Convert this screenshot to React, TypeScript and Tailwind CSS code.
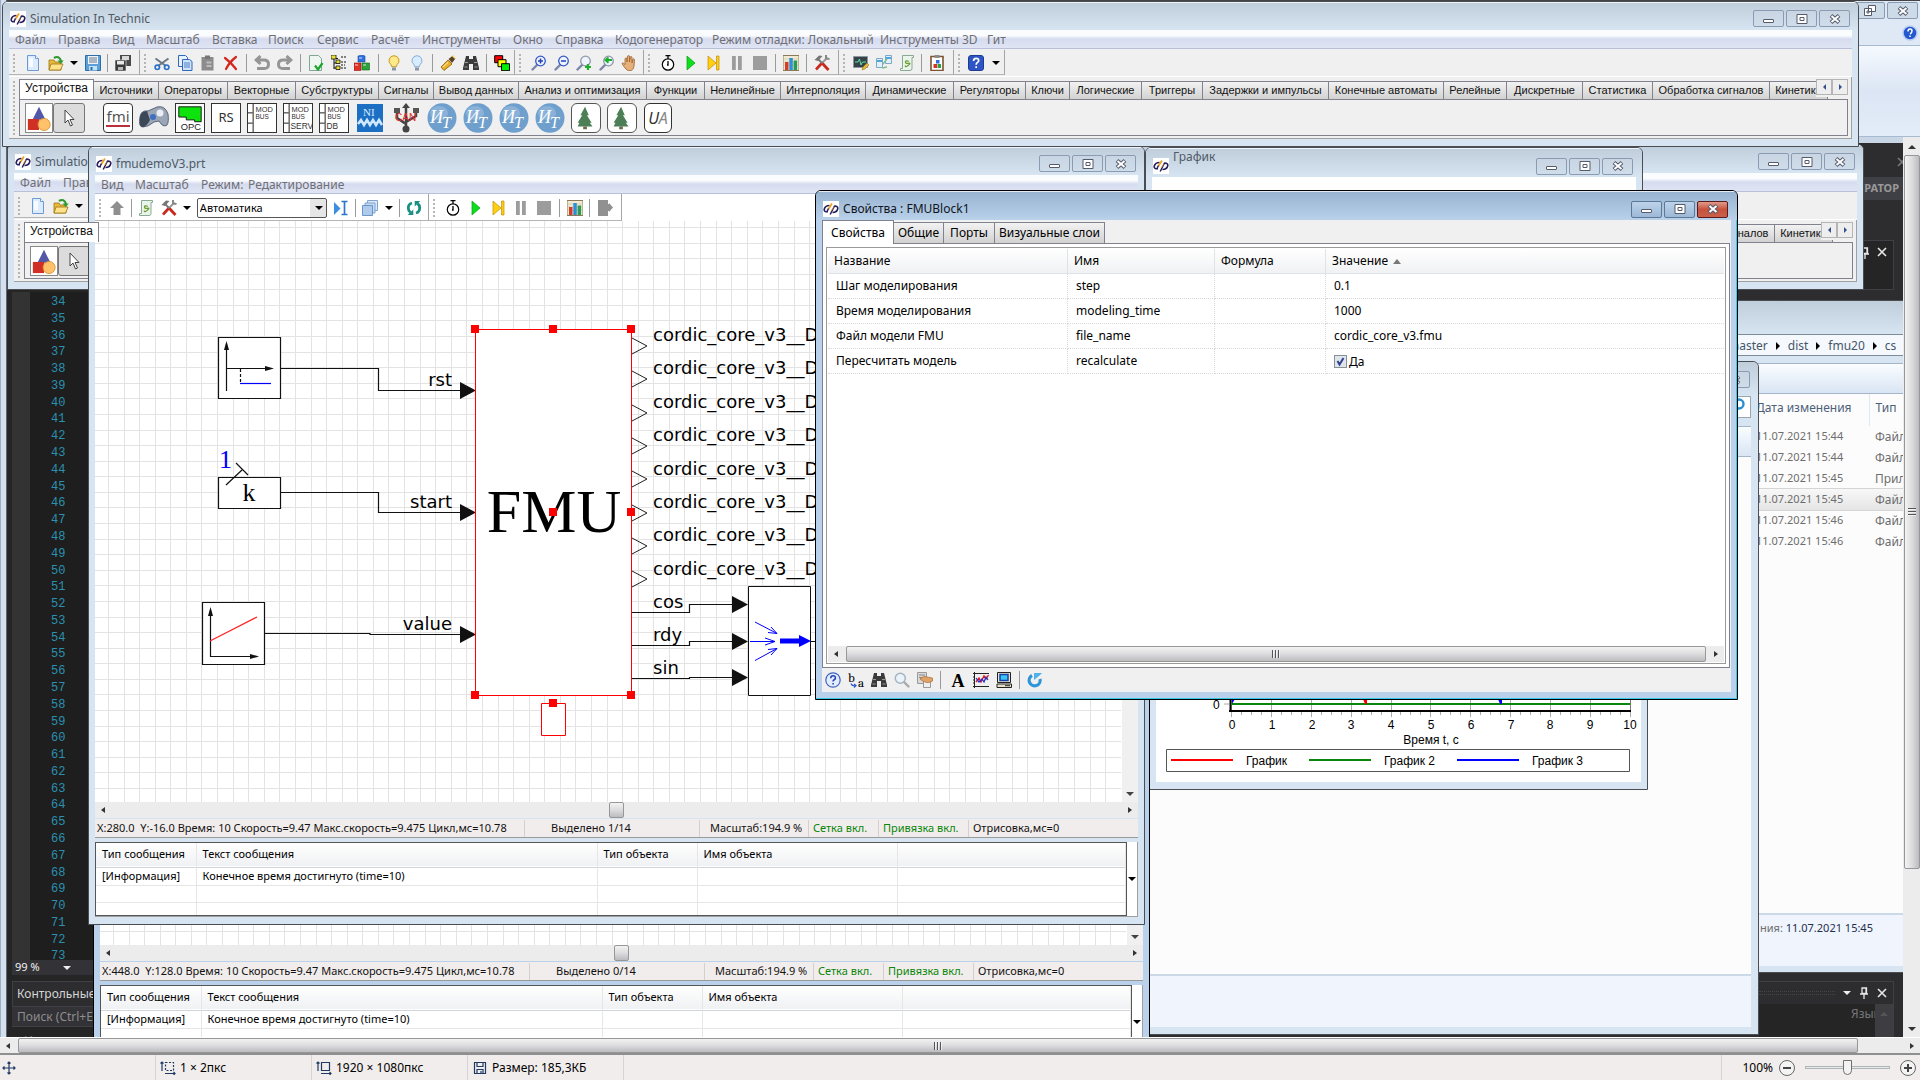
import React from "react";
import clsx from "clsx";

type Kids = { children?: React.ReactNode };

/* ---------- small drawings ---------- */

const magnifier = (c: string) => (
  <>
    <path d="M6 10 1.5 14.5" stroke="#7b86a8" strokeWidth="2.4" strokeLinecap="round" />
    <circle cx="9.5" cy="6" r="4.8" fill="#eef3ff" stroke={c} strokeWidth="1.3" />
  </>
);

const art: Record<string, React.ReactNode> = {
  new: (
    <>
      <path d="M2.5.5h8l3 3v12h-11z" fill="#dcebff" stroke="#6d9bd3" />
      <path d="M10.5.5v3h3" fill="#fff" stroke="#6d9bd3" />
      <path d="M4 3h4v9H4z" fill="#f7fbff" />
    </>
  ),
  open: (
    <>
      <path d="M1 5h5l1 2h6v8H1z" fill="#e9b93a" stroke="#9c7413" strokeWidth=".8" />
      <path d="M3 9h12l-2.5 6H1z" fill="#ffe38a" stroke="#9c7413" strokeWidth=".8" />
      <path d="M6 3c3-2 6-1 7 3" fill="none" stroke="#2f9a2f" strokeWidth="2.2" />
      <path d="M9.5 5.5h6.2L12.8 9z" fill="#2f9a2f" />
    </>
  ),
  save: (
    <>
      <path d="M.5.5h15v15h-15z" fill="#5f9fd8" stroke="#2d6da8" />
      <path d="M3 1h10v8H3z" fill="#eef4fa" />
      <path d="M4 3h8M4 5h8M4 7h8" stroke="#66788a" />
      <path d="M4 11h8v4.5H4z" fill="#bfe3f7" />
      <path d="M5.5 12h2v3h-2z" fill="#2d6da8" />
    </>
  ),
  saveall: (
    <>
      <path d="M5 0h11v11H5z" fill="#4a4a4a" />
      <path d="M7 1h7v4H7z" fill="#d8d8d8" />
      <path d="M0 5h11v11H0z" fill="#3a3a3a" stroke="#efefef" strokeWidth=".6" />
      <path d="M2 6h7v3.500H2z" fill="#e8e8e8" />
      <path d="M3 12h5v3H3z" fill="#b9b9b9" />
    </>
  ),
  cut: (
    <>
      <path d="M1.500 3.500 12 11M14.500 3.500 4 11" stroke="#6b7785" strokeWidth="2" />
      <circle cx="3.300" cy="12.300" r="2.200" fill="none" stroke="#2a74c9" strokeWidth="1.700" />
      <circle cx="12.700" cy="12.300" r="2.200" fill="none" stroke="#2a74c9" strokeWidth="1.700" />
    </>
  ),
  copy: (
    <>
      <path d="M1.500.500h7l2 2v9h-9z" fill="#e8f1ff" stroke="#2f68b8" />
      <path d="M5.500 4.500h7l2.500 2v9H5.500z" fill="#cfe1fb" stroke="#2f68b8" />
      <path d="M7 8h6M7 10h6M7 12h6" stroke="#2f68b8" strokeWidth=".8" />
    </>
  ),
  paste: (
    <>
      <path d="M1.500 2h12v13.500h-12z" fill="#8c8c8c" />
      <path d="M5 .500h5V4H5z" fill="#777" />
      <path d="M6.500 6.500h5v2h-5zM6.500 10h5v2h-5z" fill="#bdbdbd" />
    </>
  ),
  del: <path d="M2 3c4 3 8 7 11 11M13 2C9 5 5 10 3 14" fill="none" stroke="#d3261d" strokeWidth="2.200" strokeLinecap="round" />,
  undo: <path d="M4 5h6q4.500 0 4.500 4.300T10 13.500H3M6.500 1 2.200 5l4.300 4" fill="none" stroke="#959595" strokeWidth="3" />,
  redo: <path d="M12 5H6Q1.500 5 1.500 9.300T6 13.500h7M9.500 1l4.300 4-4.300 4" fill="none" stroke="#959595" strokeWidth="3" />,
  check: (
    <>
      <path d="M1.500.500h9l3 3v12h-12z" fill="#eef6f1" stroke="#7ea895" />
      <path d="m7 10.500 3 4 4.500-6.500" fill="none" stroke="#1fa52c" strokeWidth="2.200" />
    </>
  ),
  tree: (
    <>
      <path d="M3 2v12M3 3.500h4M3 8h5M3 13h5" fill="none" stroke="#111" />
      <path d="M0 0h5v4H0zM5 5h4v3.500H5zM5 11h4v3.500H5z" fill="#e6df3a" stroke="#111" strokeWidth=".8" />
      <path d="M10 2h6M10 7h6M10 10h4M10 13h6" stroke="#111" strokeDasharray="2 1" />
    </>
  ),
  cubes: (
    <>
      <path d="M4 1l4-1 3 1v6H4z" fill="#2f6fe0" stroke="#1b4aa5" strokeWidth=".6" />
      <path d="M0 8h7v7.500H0z" fill="#db3328" stroke="#92160f" strokeWidth=".6" />
      <path d="M8 8h7.500v7H8z" fill="#2ba33a" stroke="#14691f" strokeWidth=".6" />
      <path d="M1 9h3v2H1zM9 9h3v2H9zM5 2h3v2H5z" fill="#fff" opacity=".4" />
    </>
  ),
  bulb: (
    <>
      <path d="M8 .700a5 5 0 0 0-3 9l.7 2h4.600l.7-2a5 5 0 0 0-3-9z" fill="#ffe98a" stroke="#c59a1b" />
      <path d="M6 12.500h4v3H6z" fill="#8b95a5" />
    </>
  ),
  bulboff: (
    <>
      <path d="M8 .700a5 5 0 0 0-3 9l.7 2h4.600l.7-2a5 5 0 0 0-3-9z" fill="#d8ecff" stroke="#85aed6" />
      <path d="M6 12.500h4v3H6z" fill="#8b95a5" />
    </>
  ),
  torch: (
    <>
      <path d="m8 5 4 4-8 6.500L1 12z" fill="#eab028" stroke="#8a5b0a" strokeWidth=".8" />
      <path d="M8.500 4 13 .500 15.500 3.500 12 8z" fill="#5a4325" />
      <path d="M12.500.500 15.500 3.500" stroke="#ffe98a" strokeWidth="1.600" />
      <path d="m3 12 5-4.500" stroke="#fff3bd" />
    </>
  ),
  binoc: (
    <>
      <path d="M3 1h3v3h4V1h3l3 12v2h-6V9H6v6H0v-2z" fill="#3b3b3b" />
      <path d="M2 7.500h3M11 7.500h3M1.500 12h3M11.500 12h3" stroke="#9a9a9a" />
    </>
  ),
  stack: (
    <>
      <path d="M.700.700h8v7h-8z" fill="#f00" stroke="#000" />
      <path d="M4 4.700h8v7H4z" fill="#ff0" stroke="#000" />
      <path d="M7.500 8.700h8v7h-8z" fill="#0e0" stroke="#000" />
    </>
  ),
  zin: (
    <>
      {magnifier("#3257c8")}
      <path d="M9.500 3.500v5M7 6h5" stroke="#2340b8" strokeWidth="1.500" />
    </>
  ),
  zout: (
    <>
      {magnifier("#3257c8")}
      <path d="M7 6h5" stroke="#2340b8" strokeWidth="1.500" />
    </>
  ),
  zfit: (
    <>
      {magnifier("#8e98a8")}
      <path d="M12 9v6M9 12h6" stroke="#1fae2d" strokeWidth="2.200" />
    </>
  ),
  zprev: (
    <>
      {magnifier("#8e98a8")}
      <path d="M13 5H7.500M9.500 2.500 6.500 5l3 2.700" fill="none" stroke="#1fae2d" strokeWidth="2" />
    </>
  ),
  hand: <path d="M4 8V3.500q1-1 2 0V7L6.500 1q1-1 2 0v6l.7-5q1-1 1.800 0V8l1-4q1-.7 1.500.5L13 11q-.5 5-5 4.800Q5 15.500 1 8.500q1-1.500 3 1z" fill="#e5b07a" stroke="#9c5f2b" strokeWidth=".8" />,
  watch: (
    <>
      <circle cx="8" cy="9.500" r="5.700" fill="#fff" stroke="#000" strokeWidth="1.200" />
      <path d="M5.500.700h5M8 .700v3M8 6v4h-1" fill="none" stroke="#000" strokeWidth="1.300" />
    </>
  ),
  play: <path d="M4 1l8 7-8 7z" fill="#0ce01c" stroke="#0a9a14" strokeWidth=".7" />,
  step: <path d="M2 1l8 7-8 7zM10.500 1H13v14h-2.500z" fill="#ffcf10" stroke="#c48a00" strokeWidth=".7" />,
  pause: <path d="M3 1h3.800v14H3zM9 1h3.800v14H9z" fill="#9c9c9c" />,
  stop: <path d="M1 1h14v14H1z" fill="#9c9c9c" />,
  bars: (
    <>
      <path d="M0 .500h16v15H0z" fill="#f0ead2" stroke="#8a7a5a" />
      <path d="M1 4h14M1 7h14M1 10h14" stroke="#cfc5a0" strokeWidth=".7" />
      <path d="M2 7h3.500v8H2z" fill="#d93a2a" />
      <path d="M6.300 3h3.500v12H6.300z" fill="#2b8fd9" />
      <path d="M10.600 5.500h3.500V15h-3.500z" fill="#2a9a55" />
    </>
  ),
  tools: (
    <>
      <path d="M13.500 2.500 7 9" stroke="#9a9a9a" strokeWidth="2" />
      <path d="M4 4l5 5" stroke="#7a7a7a" strokeWidth="2" />
      <path d="M7.500 8.500 2 14.500" stroke="#c8281e" strokeWidth="2.600" />
      <path d="m8.500 8.500 6 6.500" stroke="#c8281e" strokeWidth="2.800" />
      <path d="M.500 5 5 .500l3.500.500L4 6z" fill="#777" />
      <path d="M12 0v3.500L15.500 4" fill="none" stroke="#888" strokeWidth="2" />
    </>
  ),
  monitor: (
    <>
      <path d="M.500 1.500h14v11H.500z" fill="#35424a" stroke="#8d989e" />
      <path d="M2 7h3l1.500-3L8 10l1.500-3H13" fill="none" stroke="#5fe0a0" />
      <path d="m9 15 1-3 4-4 2 2-4 4z" fill="#e9b93a" stroke="#8c6a12" strokeWidth=".5" />
    </>
  ),
  net: (
    <>
      <path d="M.500 3.500h6v9h-6zM9.500.500h6v8h-6z" fill="#e3f0fb" stroke="#7aa9c9" />
      <path d="M1 5h5v2H1zM10 2h5v2h-5z" fill="#4fa6dc" />
      <path d="M7 9 11 4M6 13l5-1" stroke="#7fbf8b" strokeWidth="1.500" />
    </>
  ),
  script: (
    <>
      <path d="M3.500.500h11v2h-1.500v11q0 2-2 2H1.500v-2h2z" fill="#eaf4ec" stroke="#86ab92" />
      <path d="M9.800 6.300q-3.500-1-3.300.8t3 1.200-.2 2-3 .3" fill="none" stroke="#6f9f33" strokeWidth="1.300" />
    </>
  ),
  clip: (
    <>
      <path d="M2 1.500h12v14H2z" fill="#fff" stroke="#7c5430" strokeWidth="1.600" />
      <path d="M5.500 0h5v3h-5z" fill="#8b8b8b" />
      <path d="M7 5h3.500v3.500H7z" fill="#2f6fe0" />
      <path d="M4.500 9H8v4H4.500z" fill="#db3328" />
      <path d="M8.500 9H12v4H8.500z" fill="#2ba33a" />
    </>
  ),
  help: (
    <>
      <rect x=".500" y=".500" width="15" height="15" rx="2.500" fill="#2f54c6" stroke="#1c3a94" />
      <path d="M5.500 6q.2-2.700 2.700-2.700T10.700 5.500q0 1.300-1.300 2T8.200 9.800M8.200 11.300v1.800" fill="none" stroke="#fff" strokeWidth="1.700" />
    </>
  ),
  helpround: (
    <>
      <circle cx="8" cy="8" r="7.200" fill="#e4ecff" stroke="#3d62c4" strokeWidth="1.200" />
      <path d="M5.700 6.300q.1-2.600 2.400-2.600T10.400 6q0 1.100-1.200 1.800T8.100 9.500M8.100 11v1.600" fill="none" stroke="#2747b0" strokeWidth="1.600" />
    </>
  ),
  up: <path d="M8 1 15 8h-3.500v7h-7V8H1z" fill="#8f8f8f" />,
  mode: (
    <>
      <path d="m1 2 6.500 6.500L1 15z" fill="#3f8fe0" />
      <path d="M8.500 1.500h6M8.500 14.500h6M11.500 1.500v13" stroke="#2b77c8" strokeWidth="1.700" fill="none" />
    </>
  ),
  layers: (
    <>
      <path d="M5.500.500h10v10h-10z" fill="#dbe9f8" stroke="#7ea4cf" />
      <path d="M3 3h10v10H3z" fill="#c5dbf3" stroke="#7ea4cf" />
      <path d="M.500 5.500h10v10h-10z" fill="#aecbec" stroke="#6c96c8" />
    </>
  ),
  cycle: (
    <>
      <path d="M6 3Q2.300 4 2.300 8q0 3 2.200 4.500" fill="none" stroke="#188f84" strokeWidth="2.800" />
      <path d="M10 13q3.700-1 3.700-5 0-3-2.200-4.500" fill="none" stroke="#188f84" strokeWidth="2.800" />
      <path d="M7.300 9.500V15H1.700zM8.700 6.500V1h5.600z" fill="#188f84" />
    </>
  ),
  door: <path d="M1 0h10v4h1V3l4 4.500-4 4.500v-1h-1v5H1z" fill="#919191" />,
  ba: <path d="M3 11.500q1 3 4.500 2M6 12l2 1.500L6 15.500" fill="none" stroke="#2a55d0" strokeWidth="1.200" />,
  mag: (
    <>
      <path d="m10 10 4.500 4.500" stroke="#a9a9a9" strokeWidth="2.400" strokeLinecap="round" />
      <circle cx="6.300" cy="6.300" r="5" fill="#eaf3fa" stroke="#a3b3c0" strokeWidth="1.500" />
    </>
  ),
  card: (
    <>
      <path d="M.500.500h9v11h-9z" fill="#d9d9d9" stroke="#9a9a9a" />
      <path d="M2 3h6M2 5.500h6" stroke="#888" />
      <path d="M6.500 8.500h7v7h-7z" fill="#efefef" stroke="#9a9a9a" />
      <path d="M3 7q4-4 7-2l5.500 1v3q-3 2-6 1.500T3 7z" fill="#e0a468" stroke="#a86c33" strokeWidth=".7" />
    </>
  ),
  plot: (
    <>
      <path d="M1.500 0v16M0 14.500h16M0 1.500h16M0 5h2M0 8h2M0 11h2" stroke="#222" fill="none" />
      <path d="m3 10 3-4 2 4 3-6 2 3 2.500-4" fill="none" stroke="#e01818" strokeWidth="1.400" />
      <path d="m3 6 3 4 3-3 2 3 2-5 2 3" fill="none" stroke="#1b2fd0" strokeWidth="1.200" />
    </>
  ),
  pc: (
    <>
      <path d="M1.500.500h13v10h-13z" fill="#e9e2c8" stroke="#222" />
      <path d="M4 2.500h8v6H4z" fill="#36c5f2" stroke="#1440b0" strokeWidth="1.500" />
      <path d="M1 12h14.500v3.500H1z" fill="#e9e2c8" stroke="#222" />
      <path d="M9 13.700h5" stroke="#222" />
    </>
  ),
  refresh: (
    <>
      <path d="M5 3.500A5.500 5.500 0 1 0 13 7" fill="none" stroke="#2f94d8" strokeWidth="3.200" />
      <path d="M7 8V1h8l-2.500 2.500L9.500 6z" fill="#4fb0ea" />
    </>
  ),
  logo: (
    <>
      <path d="M0 0h16v16H0z" fill="#fff" />
      <path d="M6.500 4.500Q2 4.500 1.200 8.500.800 11 5 10.800M9.500 11.500q4.500 0 5.300-4 .3-2.700-3.800-2.300" fill="none" stroke="#2a1f5c" strokeWidth="1.600" />
      <path d="M9 2.500 5.500 8" stroke="#f0a21c" strokeWidth="1.700" />
      <path d="M5.500 7.500 4 10.500M11.500 5l-4.300 8.500" stroke="#2a1f5c" strokeWidth="1.500" />
      <path d="M10.500 6.500 8 10" stroke="#f0a21c" strokeWidth=".8" />
    </>
  ),
};

function Glyph({ name, className = "size-4" }: { name: string; className?: string }) {
  return (
    <svg viewBox="0 0 16 16" fill="none" className={clsx("block shrink-0", className)} aria-hidden="true">
      {art[name]}
    </svg>
  );
}

function Tool({ name, label }: { name: string; label: string }) {
  return (
    <button type="button" aria-label={label} className="block size-4 shrink-0">
      <Glyph name={name} />
    </button>
  );
}

const Sep = () => <span className="h-[18px] w-px shrink-0 bg-[#9a9a9a]" />;

function Caret({ className = "border-t-black" }: { className?: string }) {
  return <span className={clsx("inline-block h-0 w-0 shrink-0 border-x-4 border-t-4 border-x-transparent", className)} />;
}

const Grip = ({ className = "h-[18px]" }: { className?: string }) => (
  <span className={clsx("w-0 shrink-0 border-l-2 border-dotted border-[#b5b5b5]", className)} />
);

function ToolGroup({ items, className, pad = "pl-2.5 pr-2" }: { items: string[]; className: string; pad?: string }) {
  return (
    <div className={clsx("flex shrink-0 items-center border-r border-b border-r-[#a5a5a5] border-b-[#b5b5b5] pt-0.5 pl-1", className)}>
      <Grip />
      <div className={clsx("flex flex-1 items-center justify-between", pad)}>
        {items.map((n, i) => (n === "|" ? <Sep key={i} /> : n === "v" ? <Caret key={i} /> : <Tool key={i} name={n} label={n} />))}
      </div>
    </div>
  );
}

/* ---------- window frame ---------- */

function CaptionButtons({ active = false }: { active?: boolean }) {
  const base = clsx(
    "flex h-[17px] w-[31px] items-center justify-center rounded-[2px] border",
    active ? "border-[#5b7896] bg-linear-to-b from-[#bdd3ea] to-[#9cb8d6]" : "border-[#8a9bb3] bg-linear-to-b from-[#c9d5e2] to-[#cfdcea]",
  );
  return (
    <div className="flex gap-0.5">
      <button type="button" aria-label="Свернуть" className={base}>
        <svg viewBox="0 0 12 10" className="h-2.5 w-3" fill="#fff" stroke="#555b6b"><rect x=".5" y="5.500" width="10" height="3" rx=".5" /></svg>
      </button>
      <button type="button" aria-label="Развернуть" className={base}>
        <svg viewBox="0 0 12 10" className="h-2.5 w-3" fill="#fff" stroke="#555b6b"><path d="M1 .500h10v9H1zM4 3.500h4v3H4z" /></svg>
      </button>
      <button
        type="button"
        aria-label="Закрыть"
        className={active ? "flex h-[17px] w-[31px] items-center justify-center rounded-[2px] border border-[#5a1a1a] bg-linear-to-b from-[#e09a8c] via-[#c8513c] to-[#c9604c]" : base}
      >
        <CloseMark />
      </button>
    </div>
  );
}

function CloseMark() {
  return (
    <svg viewBox="0 0 12 10" className="h-2.5 w-3">
      <path d="m2 1.500 8 7M10 1.500l-8 7" stroke="#555b6b" strokeWidth="4" />
      <path d="m2.500 2 7 6M9.500 2l-7 6" stroke="#fff" strokeWidth="2" />
    </svg>
  );
}

function Frame({ title, active, dialog, raised, className, children }: Kids & { title: string; active?: boolean; dialog?: boolean; raised?: boolean; className: string }) {
  return (
    <section
      className={clsx(
        "absolute flex flex-col overflow-hidden rounded-t-md border px-1.5 pb-[7px]",
        active ? "border-black bg-[#b9d1ea]" : "border-[#4a4d52] bg-[#d7e4f1]",
        className,
      )}
    >
      <header
        className={clsx(
          "-mx-1.5 flex shrink-0 items-center border-t border-white/60 bg-linear-to-b pl-[7px] text-xs",
          dialog ? "h-[29px] pt-1.5 pr-[9px]" : "h-7 pt-1 pr-2",
          active ? "from-[#98b3d0] to-[#b9d1ea] text-[#10151c]" : "from-[#c0cddb] to-[#d7e4f1] text-[#4f5a66]",
        )}
      >
        <Glyph name="logo" />
        <h2 className={clsx("ml-1 flex-1 whitespace-nowrap", raised && "-mt-1.5 self-start")}>{title}</h2>
        <CaptionButtons active={active && dialog} />
      </header>
      {children}
    </section>
  );
}

function Menu({ items }: { items: [string, string][] }) {
  return (
    <nav className="flex h-[19px] shrink-0 items-center overflow-hidden border-b border-[#b7c0d8] bg-linear-to-b from-[#fbfcfe] from-30% via-[#d6dcef] via-50% to-[#e0e5f5] pt-0.5 pl-1.5 text-xs text-[#6f6f75]">
      {items.map(([t, w]) => (
        <button key={t} type="button" className={clsx("shrink-0 text-left whitespace-nowrap", w)}>{t}</button>
      ))}
    </nav>
  );
}

/* ---------- scroll bars ---------- */

function HBar({ thumb, grip, className }: { thumb: string; grip?: boolean; className?: string }) {
  return (
    <div className={clsx("flex h-4 shrink-0 items-center bg-[#ececec]", className)}>
      <span className="ml-1.5 h-0 w-0 border-y-[3px] border-r-4 border-y-transparent border-r-[#333]" />
      <div className="flex h-full flex-1">
        <div className={clsx("flex items-center justify-center gap-px rounded-[2px] border border-[#979797] bg-linear-to-b from-[#f3f3f3] via-[#dcdcde] to-[#bcbcc0]", thumb)}>
          {grip && [0, 1, 2].map((i) => <span key={i} className="h-2 w-0.5 border-l border-[#555] bg-white/60" />)}
        </div>
      </div>
      <span className="mr-1.5 h-0 w-0 border-y-[3px] border-l-4 border-y-transparent border-l-[#333]" />
    </div>
  );
}

/* ---------- block library window ---------- */

const mainMenu: [string, string][] = [
  ["Файл", "w-[43px]"], ["Правка", "w-[54px]"], ["Вид", "w-[34px]"], ["Масштаб", "w-[66px]"], ["Вставка", "w-[56px]"],
  ["Поиск", "w-[49px]"], ["Сервис", "w-[54px]"], ["Расчёт", "w-[51px]"], ["Инструменты", "w-[91px]"], ["Окно", "w-[42px]"],
  ["Справка", "w-[60px]"], ["Кодогенератор", "w-[97px]"], ["Режим отладки: Локальный", "w-[168px]"], ["Инструменты 3D", "w-[107px]"], ["Гит", "w-10"],
];

const libraryTabs: [string, string][] = [
  ["Источники", "w-[65px]"], ["Операторы", "w-[69px]"], ["Векторные", "w-[68px]"], ["Субструктуры", "w-[83px]"], ["Сигналы", "w-[55px]"],
  ["Вывод данных", "w-[85px]"], ["Анализ и оптимизация", "w-[128px]"], ["Функции", "w-[58px]"], ["Нелинейные", "w-[76px]"], ["Интерполяция", "w-[85px]"],
  ["Динамические", "w-[88px]"], ["Регуляторы", "w-[72px]"], ["Ключи", "w-11"], ["Логические", "w-[72px]"], ["Триггеры", "w-[61px]"],
  ["Задержки и импульсы", "w-[126px]"], ["Конечные автоматы", "w-[115px]"], ["Релейные", "w-[63px]"], ["Дискретные", "w-[76px]"], ["Статистика", "w-[70px]"],
  ["Обработка сигналов", "w-[117px]"], ["Кинетика", "w-[58px]"],
];

const Tile = ({ children, className }: Kids & { className?: string }) => (
  <button type="button" className="flex h-full w-9 shrink-0 items-center justify-center">
    <span className={clsx("relative flex h-[30px] items-center justify-center overflow-hidden text-[13px] leading-none text-[#333]", className ?? "w-[30px]")}>{children}</span>
  </button>
);

const boxed = "w-[30px] border border-[#333] bg-white";

function Modbus({ tag }: { tag: string }) {
  return (
    <Tile className={boxed}>
      <svg viewBox="0 0 30 30" className="size-[30px]" fill="none" stroke="#111">
        <path d="M5.500 0v30M0 9.500h5M0 20.500h5" />
        <g fill="#333" stroke="none" fontFamily="Liberation Sans, sans-serif">
          <text x="8" y="9" fontSize="8">MOD</text>
          <text x="8" y="16" fontSize="7">BUS</text>
          <text x="7" y="27" fontSize="9">{tag}</text>
        </g>
      </svg>
    </Tile>
  );
}

const Round = () => (
  <Tile>
    <svg viewBox="0 0 30 30" className="size-[30px]">
      <ellipse cx="15" cy="15" rx="14.500" ry="14.800" fill="#6f9fcd" />
      <ellipse cx="12" cy="10" rx="9" ry="7" fill="#9dc0e0" opacity=".6" />
      <text x="3" y="20" fontSize="18" fontStyle="italic" fill="#fff" fontFamily="Liberation Serif, serif">И</text>
      <text x="15" y="25" fontSize="16" fontStyle="italic" fill="#fff" fontFamily="Liberation Serif, serif">Т</text>
    </svg>
  </Tile>
);

const Fir = () => (
  <Tile className="w-[30px] rounded-md border border-[#555] bg-white">
    <svg viewBox="0 0 30 30" className="size-[30px]">
      <path d="M14 3 9 12h2l-5 8h2l-2 4h16l-3-4h2l-5-8h2z" fill="#4c7f56" />
      <path d="M12 24h4v3h-4z" fill="#6b6b4f" />
    </svg>
  </Tile>
);

function Library({ className }: { className: string }) {
  return (
    <Frame title="Simulation In Technic" className={className}>
      <Menu items={mainMenu} />
      <div className="flex h-7 shrink-0 overflow-hidden border-b border-white bg-[#f0f0f0] pt-px pb-px">
        <ToolGroup className="w-[131px]" items={["new", "open", "v", "save", "|", "saveall"]} />
        <ToolGroup className="w-[375px]" pad="pl-2 pr-1" items={["cut", "copy", "paste", "del", "|", "undo", "redo", "|", "check", "tree", "cubes", "|", "bulb", "bulboff", "|", "torch", "binoc", "|", "stack"]} />
        <ToolGroup className="w-[129px]" items={["zin", "zout", "zfit", "zprev", "hand"]} pad="pl-2.5 pr-1.5" />
        <ToolGroup className="w-[195px]" items={["watch", "play", "step", "pause", "stop", "|", "bars", "|", "tools"]} />
        <ToolGroup className="w-[115px]" items={["monitor", "net", "script", "|", "clip"]} pad="pl-2 pr-2" />
        <ToolGroup className="w-[51px]" items={["help", "v"]} pad="pl-2 pr-1" />
      </div>
      <div className="flex min-h-0 flex-1 border-r border-b border-[#a0a0a0] bg-[#f0f0f0]">
        <div className="flex w-2.5 shrink-0 items-center justify-center"><Grip className="h-[54px]" /></div>
        <div className="flex min-w-0 flex-1 flex-col pt-0.5 pr-[3px] pb-0.5">
          <div className="relative flex h-5 shrink-0 items-end overflow-hidden pr-[31px] font-['Liberation_Sans',sans-serif] text-[11px] text-[#111]">
            <button type="button" className="relative z-10 -mb-px h-[21px] w-[75px] shrink-0 border border-b-0 border-[#82828f] bg-white pb-1 text-xs">Устройства</button>
            {libraryTabs.map(([t, w]) => (
              <button key={t} type="button" className={clsx("h-[18px] shrink-0 overflow-hidden border border-b-0 border-l-0 border-[#82828f] bg-linear-to-b from-[#f2f2f2] to-[#d2d2d2] text-center whitespace-nowrap", w)}>
                {t}
              </button>
            ))}
            <div className="absolute top-0 right-0 flex h-[18px] bg-[#f0f0f0]">
              {["left", "right"].map((d) => (
                <button key={d} type="button" aria-label={d} className="flex h-4 w-4 items-center justify-center border border-[#b5b5b5] bg-[#eee]">
                  <span className={clsx("h-0 w-0 border-y-[3px] border-y-transparent", d === "left" ? "border-r-[3px] border-r-[#34508c]" : "border-l-[3px] border-l-[#34508c]")} />
                </button>
              ))}
            </div>
          </div>
          <div className="flex min-h-0 flex-1 items-center overflow-hidden border border-[#82828f] bg-[#f0f0f0] pl-px">
            <Tile className="w-[28px] border border-[#888] bg-white">
              <svg viewBox="0 0 28 28" className="size-7">
                <path d="m14 2 7 14H7z" fill="#5357a8" />
                <path d="M2 15h12v12H2z" fill="#cf2f24" />
                <circle cx="19.500" cy="21" r="6.500" fill="#ffc26b" stroke="#d99433" />
              </svg>
            </Tile>
            <button type="button" aria-label="Выбор" className="-ml-1 flex h-[30px] w-8 shrink-0 items-center justify-center rounded-[3px] border border-[#777] bg-[#dcdcdc]">
              <svg viewBox="0 0 16 20" className="h-5 w-4"><path d="M4 2v13l3-3 2.500 6 2-1-2.500-5.500h4z" fill="#fff" stroke="#444" /></svg>
            </button>
            <div className="ml-[15px] flex h-full">
              <Tile className="w-[30px] rounded border border-[#333] bg-white">
                <span className="border-b-2 border-[#b8303c] pb-px text-[15px] text-[#555]">fmi</span>
              </Tile>
              <Tile>
                <svg viewBox="0 0 30 30" className="size-[30px]">
                  <path d="M1 14q1-7 8-6l9-4q8-2 11 7 1 8-1 11-4 3-8-4l-5 1Q9 24 4 24T1 14z" fill="#9aa5b5" stroke="#5a6678" />
                  <path d="M1 14q1-6 7-6l3 9Q8 23 4 24T1 14z" fill="#3c4758" />
                  <circle cx="21" cy="10" r="3.500" fill="#e9eef5" /><circle cx="14" cy="14" r="3" fill="#3e6fc0" />
                </svg>
              </Tile>
              <Tile className={boxed}>
                <svg viewBox="0 0 30 30" className="size-[30px]">
                  <path d="M3 3h24v16h-7v-2h-9v-3H3z" fill="#0de30d" stroke="#111" />
                  <text x="5" y="28" fontSize="10" fill="#222" fontFamily="Liberation Sans, sans-serif">OPC</text>
                </svg>
              </Tile>
              <Tile className={boxed}>RS</Tile>
              <Modbus tag="" />
              <Modbus tag="SERV" />
              <Modbus tag="DB" />
              <Tile>
                <svg viewBox="0 0 30 30" className="size-[30px]">
                  <path d="M2 1h26v28H2z" fill="#1d6fc4" />
                  <text x="8" y="13" fontSize="11" fill="#d8ecff" fontFamily="Liberation Serif, serif">NI</text>
                  <path d="m3 21 3-4 3 5 3-5 3 5 3-5 3 5 3-5 3 5" fill="none" stroke="#cfe8ff" strokeWidth="2.500" />
                </svg>
              </Tile>
              <Tile>
                <svg viewBox="0 0 30 30" className="size-[30px]">
                  <path d="M15 4v20M15 21l-9-6V9M15 19l10-6V7" fill="none" stroke="#444" strokeWidth="2.500" />
                  <path d="m15 0 4 5h-8z" fill="#444" /><circle cx="15" cy="26" r="3.500" fill="#444" />
                  <path d="M3 5h6v5H3zM22 5h6v5h-6z" fill="#555" />
                  <text x="4" y="18" fontSize="10" fill="#e02a2a" fontFamily="Liberation Sans, sans-serif">CAN</text>
                </svg>
              </Tile>
              <Round /><Round /><Round /><Round />
              <Fir /><Fir />
              <Tile className="w-[28px] rounded-md border border-[#333] bg-white"><i className="text-base">U<span className="text-[#888]">A</span></i></Tile>
            </div>
          </div>
        </div>
      </div>
    </Frame>
  );
}

/* ---------- schematic window ---------- */

const PITCH = 15.58;
function Grid() {
  const cols = Array.from({ length: 66 }, (_, i) => Math.round(13 + i * PITCH));
  const rows = Array.from({ length: 38 }, (_, i) => Math.round(6 + i * PITCH));
  return (
    <g stroke="#e3e3e3" shapeRendering="crispEdges">
      {cols.map((x) => <line key={`c${x}`} x1={x + 0.5} x2={x + 0.5} y1="0" y2="600" />)}
      {rows.map((y) => <line key={`r${y}`} y1={y + 0.5} y2={y + 0.5} x1="0" x2="1026" />)}
    </g>
  );
}

function Schematic() {
  return (
    <g transform="translate(-95 -221)">
      <g fill="none" stroke="#111" strokeWidth="1.200">
        <path fill="#fff" d="M218.500 337.500h62v61h-62z" />
        <path d="M226.500 391v-47M226 368.500h46" />
        <path d="M240.500 369v14" strokeDasharray="3 2" />
        <path d="M240 383.500h31" stroke="#00f" />
        <path d="M281 368.500h97.500v22H461M281 492.500h97.500v20H461M265 633.500h105v1h91" />
        <path fill="#fff" d="M218.500 477.500h62v31h-62z" />
        <path d="m226 485 16-15M236 463l12 12" />
        <path fill="#fff" d="M202.500 602.500h62v62h-62z" />
        <path d="M210.500 610v46.500H257" />
        <path d="m210 641 47-24" stroke="#f22" />
        <path d="M632 612.500h57.500v-8H732M632 645.500h57.500v-4H732M632 678.500h57.500v-1H732M811 641.500h4" />
      </g>
      <g fill="#111">
        <path d="m226.500 341 2.500 9h-5zM274 368.500l-9-2.500v5zM210.500 607l2.500 9h-5zM259 656.500l-9-2.500v5z" />
        <path d="M460 382v17l16-8.500zM460 504v17l16-8.500zM460 626v17l16-8.500z" />
        <path d="M732 596v17l16-8.500zM732 633v17l16-8.500zM732 669v17l16-8.500z" />
      </g>
      <path d="M475.500 329.500h156v366h-156z" fill="#fff" stroke="#f00" />
      <path d="M541.500 703.500h24v32h-24z" fill="#fff" stroke="#f00" />
      <text x="554" y="532" textAnchor="middle" fontSize="62" fontFamily="Liberation Serif, serif">FMU</text>
      <g fill="none" stroke="#222">
        {[0, 1, 2, 3, 4, 5, 6, 7].map((i) => {
          const y = Math.round(346 + i * 33.35);
          return <path key={i} d={`M632 ${y - 8}l15 8-15 8`} />;
        })}
      </g>
      <g fill="#f00">
        {[[475, 329], [553, 329], [631, 329], [553, 512], [631, 512], [475, 695], [631, 695], [553, 703]].map(([x, y]) => (
          <rect key={`${x}-${y}`} x={x - 4} y={y - 4} width="8" height="8" />
        ))}
      </g>
      <path d="M748.500 586.500h62v109h-62z" fill="#fff" stroke="#111" />
      <g fill="none" stroke="#00f">
        <path d="m755 622 22 11.500M777 633.500l-6-6.500M777 633.500l-9-1M750 641.500h25M775 641.500l-10-3.500M775 641.500l-10 3.500M755 660.500l22-12M777 648.500l-9 1M777 648.500l-6 6.500" />
        <path d="M780 641h20" strokeWidth="5" />
      </g>
      <path d="m799 635 12 6-12 6z" fill="#00f" />
      <g fontSize="18" fontFamily="DejaVu Sans, sans-serif" fill="#000">
        <g textAnchor="end">
          <text x="452" y="386">rst</text>
          <text x="452" y="508">start</text>
          <text x="452" y="630">value</text>
        </g>
        {[0, 1, 2, 3, 4, 5, 6, 7].map((i) => (
          <text key={i} x="653" y={Math.round(341 + i * 33.4)}>cordic_core_v3__D</text>
        ))}
        <text x="653" y="608">cos</text>
        <text x="653" y="641">rdy</text>
        <text x="653" y="674">sin</text>
      </g>
      <g fontFamily="Liberation Serif, serif" fontSize="26">
        <text x="219" y="468" fill="#00f">1</text>
        <text x="249" y="501" textAnchor="middle">k</text>
      </g>
    </g>
  );
}

function Messages() {
  const cell = "border-r border-[#e6e6e6] px-1.5 font-normal whitespace-nowrap";
  return (
    <div className="mt-1 flex h-[75px] shrink-0 border-r border-b border-[#a0a0a0] bg-white">
      <div className="min-w-0 flex-1 overflow-hidden border border-[#555]">
        <table className="w-full table-fixed border-collapse text-left text-[11px]">
          <colgroup>
            <col className="w-[100px]" /><col className="w-[401px]" /><col className="w-[100px]" /><col className="w-[200px]" /><col />
          </colgroup>
          <thead>
            <tr className="h-6 border-b border-[#d0d4d8] bg-linear-to-b from-white to-[#f0f1f3]">
              {["Тип сообщения", "Текст сообщения", "Тип объекта", "Имя объекта", ""].map((h, i) => <th key={i} className={cell}>{h}</th>)}
            </tr>
          </thead>
          <tbody>
            <tr className="h-[18px] border-b border-[#e6e6e6]">
              {["[Информация]", "Конечное время достигнуто (time=10)", "", "", ""].map((h, i) => <td key={i} className={cell}>{h}</td>)}
            </tr>
            {[0, 1].map((r) => (
              <tr key={r} className="h-[17px] border-b border-[#e6e6e6]">{[0, 1, 2, 3, 4].map((i) => <td key={i} className={cell} />)}</tr>
            ))}
          </tbody>
        </table>
      </div>
      <div className="flex w-2.5 items-center justify-center"><Caret /></div>
    </div>
  );
}

function Editor({ className, pos, picked, active, children }: Kids & { className: string; pos: string; picked: string; active?: boolean }) {
  const cell = "h-full shrink-0 border-r border-[#d5cfcf] flex items-center";
  return (
    <Frame title="fmudemoV3.prt" active={active} className={className}>
      <Menu items={[["Вид", "w-[34px]"], ["Масштаб", "w-[66px]"], ["Режим:", "w-[47px]"], ["Редактирование", "w-[110px]"]]} />
      <div className="flex h-[27px] shrink-0 bg-white">
        <div className="flex w-[334px] shrink-0 items-center border-r border-b border-r-[#a5a5a5] border-b-[#b5b5b5] pt-0.5 pl-1">
          <Grip />
          <div className="flex flex-1 items-center justify-between pr-1.5 pl-2">
            <Tool name="up" label="Вверх" /><Sep /><Tool name="script" label="Скрипт" /><Tool name="tools" label="Параметры" /><Caret />
            <div className="relative flex items-center">
              <select aria-label="Слой" className="h-5 w-[130px] appearance-none rounded-[2px] border border-[#555] bg-white bg-linear-to-r from-transparent from-[112px] to-[#e6e6e6] to-[112px] px-0.5 py-0 text-[11px] leading-4">
                <option>Автоматика</option>
              </select>
              <span className="pointer-events-none absolute right-1 flex"><Caret /></span>
            </div>
            <Tool name="mode" label="Режим" /><Sep /><Tool name="layers" label="Слои" /><Caret /><Sep /><Tool name="cycle" label="Обновить" />
          </div>
        </div>
        <ToolGroup className="w-[193px]" items={["watch", "play", "step", "pause", "stop", "|", "bars", "|", "door"]} />
      </div>
      <div className="flex min-h-0 flex-1">
        <div className="relative min-w-0 flex-1 overflow-hidden bg-white">
          <svg className="absolute top-0 left-0 h-[582px] w-[1026px]">
            <Grid />
            {children}
          </svg>
        </div>
        <div className="flex w-4 flex-col items-center justify-end bg-[#f0f0f0] pb-1.5"><Caret className="border-t-[#444]" /></div>
      </div>
      <HBar thumb="ml-[504px] w-[15px]" />
      <div className="mt-px flex h-[19px] shrink-0 items-center border-b border-[#9a9a9a] bg-[#f1edec] pt-px text-[11px] whitespace-nowrap text-[#111]">
        <span className={clsx(cell, "w-[430px] pl-0.5 whitespace-pre")}>{pos} Время: 10 Скорость=9.47 Макс.скорость=9.475 Цикл,мс=10.78</span>
        <span className={clsx(cell, "w-[175px] pl-[26px]")}>Выделено {picked}/14</span>
        <span className={clsx(cell, "w-[109px] pl-2.5")}>Масштаб:194.9 %</span>
        <span className={clsx(cell, "w-[70px] pl-1 text-[#0a860a]")}>Сетка вкл.</span>
        <span className={clsx(cell, "w-[90px] pl-1 text-[#0a860a]")}>Привязка вкл.</span>
        <span className="pl-1">Отрисовка,мс=0</span>
      </div>
      <Messages />
    </Frame>
  );
}

/* ---------- properties dialog ---------- */

const props: [string, string, string][] = [
  ["Шаг моделирования", "step", "0.1"],
  ["Время моделирования", "modeling_time", "1000"],
  ["Файл модели FMU", "file_name", "cordic_core_v3.fmu"],
];

function Properties() {
  const tab = "h-[21px] shrink-0 border border-b-0 border-l-0 border-[#82828f] bg-linear-to-b from-[#f2f2f2] to-[#d2d2d2]";
  const th = "border-r border-b border-[#e0e3e6] pl-1.5 font-normal";
  const td = "border-r border-b border-dotted border-[#d8d8d8] pl-2";
  return (
    <Frame dialog active title="Свойства : FMUBlock1" className="top-[190px] left-[815px] h-[510px] w-[923px] shadow-[inset_-1px_-1px_0_#35c8e8]">
      <div className="flex min-h-0 flex-1 flex-col bg-[#f0f0f0]">
        <div className="flex h-[23px] shrink-0 items-end text-xs">
          <button type="button" className="relative z-10 -mb-px h-6 w-[72px] border border-b-0 border-[#82828f] bg-white">Свойства</button>
          <button type="button" className={clsx(tab, "w-[50px]")}>Общие</button>
          <button type="button" className={clsx(tab, "w-[51px]")}>Порты</button>
          <button type="button" className={clsx(tab, "w-[110px]")}>Визуальные слои</button>
        </div>
        <div className="mr-px flex min-h-0 flex-1 flex-col border border-[#82828f] bg-white p-[3px]">
          <div className="flex min-h-0 flex-1 flex-col border border-[#9a9a9a] p-px">
            <table className="w-full table-fixed border-separate border-spacing-0 text-left text-xs text-black">
              <colgroup><col className="w-[240px]" /><col className="w-[147px]" /><col className="w-[111px]" /><col /></colgroup>
              <thead>
                <tr className="h-[25px] bg-linear-to-b from-white to-[#f0f1f3]">
                  <th className={th}>Название</th>
                  <th className={th}>Имя</th>
                  <th className={th}>Формула</th>
                  <th className={clsx(th, "border-r-0")}>
                    Значение <span className="ml-0.5 inline-block border-x-4 border-b-[5px] border-x-transparent border-b-[#777] align-middle" />
                  </th>
                </tr>
              </thead>
              <tbody>
                {props.map(([a, b, c]) => (
                  <tr key={b} className="h-[25px]">
                    <td className={td}>{a}</td><td className={td}>{b}</td><td className={td} /><td className={clsx(td, "border-r-0")}>{c}</td>
                  </tr>
                ))}
                <tr className="h-[25px]">
                  <td className={td}>Пересчитать модель</td><td className={td}>recalculate</td><td className={td} />
                  <td className={clsx(td, "border-r-0")}>
                    <label className="flex items-center gap-0.5">
                      <span className="relative flex size-[13px]">
                        <input type="checkbox" defaultChecked className="size-[13px] appearance-none border border-[#8a8f94] bg-[#dfe5ec]" />
                        <svg viewBox="0 0 13 13" className="pointer-events-none absolute inset-0"><path d="m3.500 6 2 3.500L9.500 3" fill="none" stroke="#33418c" strokeWidth="2" /></svg>
                      </span>
                      <span className="pt-0.5">Да</span>
                    </label>
                  </td>
                </tr>
              </tbody>
            </table>
            <div className="flex-1" />
            <HBar grip thumb="ml-2 mr-2 flex-1" />
          </div>
        </div>
        <div className="flex h-6 shrink-0 items-center gap-[7px] pl-[3px]">
          <Tool name="helpround" label="Справка" />
          <button type="button" aria-label="Переименовать" className="relative size-4 font-serif text-[13px] leading-none">
            <span className="absolute -top-px left-0">b</span>
            <span className="absolute top-1 left-2.5">a</span>
            <Glyph name="ba" />
          </button>
          <Tool name="binoc" label="Найти" /><Tool name="mag" label="Просмотр" /><Tool name="card" label="Карточка" /><Sep />
          <button type="button" className="ml-0.5 size-4 font-['Liberation_Serif',serif] text-lg leading-none font-bold">A</button>
          <Tool name="plot" label="График" /><Tool name="pc" label="Компьютер" /><Sep /><Tool name="refresh" label="Обновить" />
        </div>
      </div>
    </Frame>
  );
}

/* ---------- chart windows ---------- */

function ChartWindow({ className, children }: Kids & { className: string }) {
  return (
    <Frame dialog raised title="График" className={className}>
      <div className="relative min-h-0 flex-1 bg-white">{children}</div>
    </Frame>
  );
}

function Plot() {
  return (
    <svg className="absolute bottom-0 left-0 h-[83px] w-[484px]" fontFamily="Liberation Sans, sans-serif" fontSize="12">
      <g transform="translate(-1156 -699)">
        {Array.from({ length: 41 }, (_, i) => {
          const x = Math.round(1231 + i * 9.97) + 0.5;
          return <path key={i} d={i % 4 ? `M${x} 712v3` : `M${x} 699v18`} stroke="#aaa" />;
        })}
        <path d="M1230.500 699v12" stroke="#000" strokeWidth="2" />
        <path d="M1630.500 699v12" stroke="#777" />
        <path d="M1231 704h399" stroke="#0a860a" strokeWidth="2" />
        <path d="M1229 711h402" stroke="#000" strokeWidth="2" />
        <path d="m1232 699 3 0-3 5z" fill="#00f" />
        <path d="M1363 699h4v5h-2z" fill="#f00" />
        <path d="M1498 699h4v5h-2z" fill="#00f" />
        <path d="M1224 704h5" stroke="#aaa" />
        <text x="1213" y="709">0</text>
        {Array.from({ length: 11 }, (_, i) => (
          <text key={i} x={Math.round(1232 + i * 39.8)} y="729" textAnchor="middle">{i}</text>
        ))}
        <text x="1431" y="744" textAnchor="middle">Время t, c</text>
        <path d="M1166.500 749.500h463v22h-463z" fill="none" stroke="#555" />
        <path d="M1171 760h62" stroke="#f00" strokeWidth="2" />
        <path d="M1309 760h62" stroke="#0a860a" strokeWidth="2" />
        <path d="M1457 760h62" stroke="#00f" strokeWidth="2" />
        <text x="1246" y="765">График</text>
        <text x="1384" y="765">График 2</text>
        <text x="1532" y="765">График 3</text>
      </g>
    </svg>
  );
}

/* ---------- file manager windows ---------- */

const files: [string, string][] = [
  ["11.07.2021 15:44", "Файл"], ["11.07.2021 15:44", "Файл"], ["11.07.2021 15:45", "Приложение"],
  ["11.07.2021 15:45", "Файл"], ["11.07.2021 15:46", "Файл"], ["11.07.2021 15:46", "Файл"],
];

function Explorer() {
  return (
    <section className="absolute top-[300px] right-0 bottom-[64px] flex w-[203px] flex-col overflow-hidden border-y border-[#4a4d52] bg-[#d7e4f1] text-xs text-[#6d6d6d]">
      <div className="h-[33px] shrink-0 bg-linear-to-b from-[#c0cddb] to-[#d7e4f1]" />
      <div className="flex h-[22px] shrink-0 items-center gap-1.5 border-y border-[#7e8b99] bg-[#f5f9fd] pt-px pl-7 whitespace-nowrap text-[#45566b]">
        <span>master</span>
        {["dist", "fmu20", "cs"].map((p) => (
          <React.Fragment key={p}>
            <span className="mx-0.5 h-0 w-0 border-y-4 border-l-4 border-y-transparent border-l-black" />
            <a href="#path">{p}</a>
          </React.Fragment>
        ))}
      </div>
      <div className="mt-[7px] h-[31px] shrink-0 border-y border-[#a5b5c9] bg-linear-to-b from-[#fafdff] to-[#d9e5f4]" />
      <div className="flex-1 bg-[#fcfcfc] pl-[56px]">
        <table className="w-full table-fixed border-collapse text-left whitespace-nowrap">
          <colgroup><col className="w-[113px]" /><col /></colgroup>
          <thead><tr className="h-8 align-top leading-7 text-[#4c607a]"><th className="border-r border-[#dfe7f0] font-normal">Дата изменения</th><th className="overflow-hidden pl-1.5 font-normal">Тип</th></tr></thead>
          <tbody>
            {files.map(([d, t], i) => (
              <tr key={i} className={clsx("h-[21px]", i === 3 && "bg-linear-to-b from-[#f8f8f8] to-[#e5e5e5] outline outline-[#d5d5d5]")}>
                <td className="text-[11px]">{d}</td><td className="overflow-hidden pl-1.5">{t}</td>
              </tr>
            ))}
          </tbody>
        </table>
      </div>
      <div className="h-[53px] shrink-0 border-t-2 border-[#cbd8e8] bg-[#f0f4fc] pt-1.5 pl-[60px] text-[11px] whitespace-nowrap">
        ния: <span className="text-[#1e2f4f]">11.07.2021 15:45</span>
      </div>
      <div className="h-1.5 shrink-0" />
    </section>
  );
}

function ExplorerBack() {
  return (
    <section className="absolute top-[361px] bottom-[2px] left-[1149px] flex w-[610px] flex-col rounded-t-md border border-[#4a4d52] bg-[#d7e4f1] pr-[7px] pb-[7px]">
      <div className="-mr-[7px] flex h-[34px] shrink-0 justify-end rounded-t-md bg-linear-to-b from-[#c0cddb] to-[#d7e4f1] pt-[9px] pr-2"><CaptionButtons /></div>
      <div className="flex h-[22px] shrink-0 justify-end border border-[#9aa5b3] bg-white">
        <svg viewBox="0 0 16 16" className="mr-1 size-4"><circle cx="9" cy="7" r="4.500" fill="none" stroke="#2d8fd0" strokeWidth="2.400" /></svg>
      </div>
      <div className="mt-2 h-[31px] shrink-0 border-y border-[#a5b5c9] bg-linear-to-b from-[#fafdff] to-[#d9e5f4]" />
      <div className="flex-1 bg-[#fcfcfc]" />
      <div className="h-[53px] shrink-0 border-t-2 border-[#cbd8e8] bg-[#f0f4fc]" />
    </section>
  );
}

/* ---------- dark code editor ---------- */

const Pin = () => (
  <svg viewBox="0 0 10 12" className="h-3 w-2.5" fill="none" stroke="#e8e8e8" strokeWidth="1.300"><path d="M3 1h4.500v5.500H3zM1 7h8M5 7v5M7 1v5" /></svg>
);
const Cross = ({ className }: { className: string }) => (
  <svg viewBox="0 0 10 10" className={clsx("size-2.5", className)} fill="none" stroke="currentColor" strokeWidth="1.600"><path d="m1 1 8 8M9 1 1 9" /></svg>
);

function CodeEditor() {
  return (
    <section className="absolute top-[143px] right-0 bottom-0 left-[7px] flex justify-between bg-[#2d2d30] text-xs">
      <div className="flex w-[90px] flex-col overflow-hidden bg-[#252526] pt-[149px] pl-[5px]">
        <div className="relative h-[668px] shrink-0 overflow-hidden border-l-[18px] border-[#333333] bg-[#1e1e1e] pt-0.5 pl-[21px] font-['Liberation_Mono',monospace] text-xs text-[#2b91af]">
          <ol className="flex h-[671px] flex-col justify-between">
            {Array.from({ length: 40 }, (_, i) => <li key={i} className="h-4 leading-4">{34 + i}</li>)}
          </ol>
        </div>
        <div className="flex h-[15px] shrink-0 items-center justify-between bg-[#333337] pr-[26px] pl-[3px] text-[11px] text-[#f0f0f0]">99 % <Caret className="border-t-[#eee]" /></div>
        <div className="mt-[6px] flex h-[25px] shrink-0 items-center border-t border-l border-[#3f3f46] bg-[#2d2d30] pl-1 text-[#d5d5d5]">Контрольные</div>
        <div className="flex h-[21px] shrink-0 items-center overflow-hidden border-y border-[#3f3f46] bg-[#333337] pl-[5px] whitespace-nowrap text-[#8d8d8d]">Поиск (Ctrl+E)</div>
        <div className="mt-1.5 shrink-0 pl-3 text-[#777]">Имя</div>
      </div>
      <div className="flex w-[144px] flex-col justify-between text-[#999]">
        <div>
          <div className="flex h-[34px] items-center justify-end overflow-hidden pt-1"><Cross className="-mr-1 text-[#777]" /></div>
          <div className="flex h-[23px] items-center justify-end bg-[#3f3f46] pr-1 text-[11px] font-bold">ОПЕРАТОР</div>
          <div className="mt-10 mr-[9px] flex h-[50px] justify-end gap-[7px] border border-[#3f3f46] bg-[#252526] pt-1.5 pr-1.5"><Pin /><Cross className="text-[#e8e8e8]" /></div>
        </div>
        <div className="mr-[9px] h-[56px] border-t border-r border-[#3f3f46]">
          <div className="flex h-[22px] items-center gap-2 pr-1.5">
            <span className="h-1 flex-1 border-y border-dotted border-[#46464a]" />
            <Caret className="border-t-[#eee]" /><Pin /><Cross className="text-[#e8e8e8]" />
          </div>
          <div className="flex h-[33px] justify-end bg-[#252526]">
            <span className="w-6 overflow-hidden pt-0.5 text-[#777]">Язык</span>
            <span className="flex w-[18px] justify-center bg-[#3e3e42] pt-2"><span className="h-0 border-x-4 border-b-4 border-x-transparent border-b-[#555]" /></span>
          </div>
        </div>
      </div>
    </section>
  );
}

/* ---------- image viewer shell ---------- */

function StatusItem({ icon, children, className }: Kids & { icon: React.ReactNode; className: string }) {
  return (
    <div className={clsx("flex h-full shrink-0 items-center gap-1 border-r border-[#d8d3d2] whitespace-nowrap", className)}>
      <svg viewBox="0 0 16 14" className="h-3.5 w-4 shrink-0" fill="none" stroke="#1f3a63" strokeWidth="1.200">{icon}</svg>
      {children}
    </div>
  );
}

export default function App() {
  return (
    <div className="relative flex h-screen w-full flex-col overflow-hidden bg-[#c9d6e6] font-['Noto_Sans',sans-serif] text-xs text-black">
      <header className="flex h-[46px] shrink-0 flex-col items-end border-t border-[#444] border-b border-b-[#a9bbd3] bg-[#dfe9f5] pr-0.5">
        <div className="flex gap-0.5 pt-px">
          <button type="button" aria-label="Восстановить" className="flex h-[17px] w-[31px] items-center justify-center rounded-[2px] border border-[#8a9bb3] bg-[#cddae8]">
            <svg viewBox="0 0 12 11" className="h-[11px] w-3" fill="#fff" stroke="#555b6b"><path d="M4.500.500h7v6h-7zM.500 3.500h7v7h-7zM3 6h2v2H3z" /></svg>
          </button>
          <button type="button" aria-label="Закрыть" className="flex h-[17px] w-[31px] items-center justify-center rounded-[2px] border border-[#8a9bb3] bg-[#cddae8]"><CloseMark /></button>
        </div>
        <button type="button" aria-label="Справка" className="mt-1.5">
          <svg viewBox="0 0 16 16" className="size-4"><circle cx="8" cy="8" r="7" fill="#2358cf" stroke="#b8cdf2" strokeWidth="1.500" /><path d="M6 6.500q0-2.500 2-2.500t2 2-2 3M8 10.500v1.500" fill="none" stroke="#fff" strokeWidth="1.500" /></svg>
        </button>
      </header>
      <div className="h-[91px] shrink-0 border-b border-[#a9bbd3] bg-linear-to-b from-[#f5faff] via-[#dce5f4] to-[#e2edf8]" />
      <div className="flex min-h-0 flex-1 justify-end">
        <div className="flex w-[17px] flex-col items-center bg-[#ececec] pt-2 pb-1.5">
          <span className="h-0 border-x-4 border-b-4 border-x-transparent border-b-[#333]" />
          <div className="mt-1.5 flex w-4 flex-1 flex-col items-center justify-center gap-px rounded-[2px] border border-[#979797] bg-linear-to-r from-[#f3f3f3] via-[#dcdcde] to-[#bcbcc0]">
            {[0, 1, 2].map((i) => <span key={i} className="h-0.5 w-2 border-t border-[#555] bg-white/60" />)}
          </div>
          <div className="h-[158px]" />
          <Caret className="border-t-[#333]" />
        </div>
      </div>
      <HBar grip thumb="ml-2 w-[1840px] max-w-full" className="border-t border-white" />
      <footer className="flex h-[27px] shrink-0 items-center border-t-2 border-[#8f8f8f] bg-[#f1edec]">
        <StatusItem className="w-[156px] pl-px" icon={<path d="M8 1v12M2 7h12M6.500 2.500 8 1l1.500 1.500M6.500 11.500 8 13l1.500-1.500M3.500 5.500 2 7l1.500 1.500M12.500 5.500 14 7l-1.500 1.500" />} />
        <StatusItem className="w-[156px] pl-1" icon={<><path d="M5.500 1.500h8v8h-8z" strokeDasharray="2 1.500" /><path d="M2 10V1M.500 2.500 2 1l1.500 1.500M5 12.500h10M13.500 11l1.500 1.500-1.500 1.500" /></>}>1 × 2пкс</StatusItem>
        <StatusItem className="w-[156px] pl-1" icon={<><path d="M5.500 1.500h8v8h-8z" /><path d="M2 10V1M.500 2.500 2 1l1.500 1.500M5 12.500h10M13.500 11l1.500 1.500-1.500 1.500" /></>}>1920 × 1080пкс</StatusItem>
        <StatusItem className="w-[156px] pl-1" icon={<path d="M2.500 1.500h11v11h-11zM5 1.500v4h6v-4M5 12.500v-4h6v4M9 10v2" />}>Размер: 185,3КБ</StatusItem>
        <div className="ml-auto flex h-full items-center gap-1.5 border-l border-[#d8d3d2] pr-1 pl-5">
          <label htmlFor="zoom">100%</label>
          <button type="button" aria-label="Уменьшить" className="flex size-4 items-center justify-center rounded-full border border-[#666] bg-[#f4f4f4]"><span className="h-0.5 w-2 bg-[#444]" /></button>
          <input
            id="zoom"
            type="range"
            defaultValue={50}
            className="mx-1 h-4 w-[85px] appearance-none bg-transparent [&::-webkit-slider-runnable-track]:h-[3px] [&::-webkit-slider-runnable-track]:border [&::-webkit-slider-runnable-track]:border-[#b0b5b5] [&::-webkit-slider-runnable-track]:bg-[#e7eaea] [&::-webkit-slider-thumb]:-mt-[7px] [&::-webkit-slider-thumb]:h-[15px] [&::-webkit-slider-thumb]:w-[9px] [&::-webkit-slider-thumb]:appearance-none [&::-webkit-slider-thumb]:rounded-b-md [&::-webkit-slider-thumb]:border [&::-webkit-slider-thumb]:border-[#707070] [&::-webkit-slider-thumb]:bg-[#f3f3f3]"
          />
          <button type="button" aria-label="Увеличить" className="flex size-4 items-center justify-center rounded-full border border-[#666] bg-[#f4f4f4]">
            <svg viewBox="0 0 8 8" className="size-2" stroke="#444" strokeWidth="2"><path d="M4 0v8M0 4h8" /></svg>
          </button>
        </div>
      </footer>

      <main className="absolute top-0 right-[17px] bottom-[43px] left-0 overflow-hidden">
        <div className="absolute top-0 bottom-0 left-0 w-[7px] border-x border-l-[#9fb0c6] border-r-[#5a6878] bg-[#d5e0ee]" />
        <CodeEditor />
        <Explorer />
        <ExplorerBack />
        <ChartWindow className="top-[290px] left-[1149px] h-[500px] w-[499px]"><Plot /></ChartWindow>
        <Editor active className="top-[289px] left-[93px] h-[779px] w-[1057px]" pos="X:448.0  Y:128.0" picked="0" />
        <Library className="top-[144px] right-[39px] left-[7px] h-[146px]" />
        <ChartWindow className="top-[147px] left-[1145px] h-[500px] w-[498px]" />
        <Editor className="top-[146px] left-[88px] h-[779px] w-[1057px]" pos="X:280.0  Y:-16.0" picked="1"><Schematic /></Editor>
        <Library className="top-px right-[44px] left-[2px] h-[146px]" />
        <Properties />
      </main>
    </div>
  );
}
